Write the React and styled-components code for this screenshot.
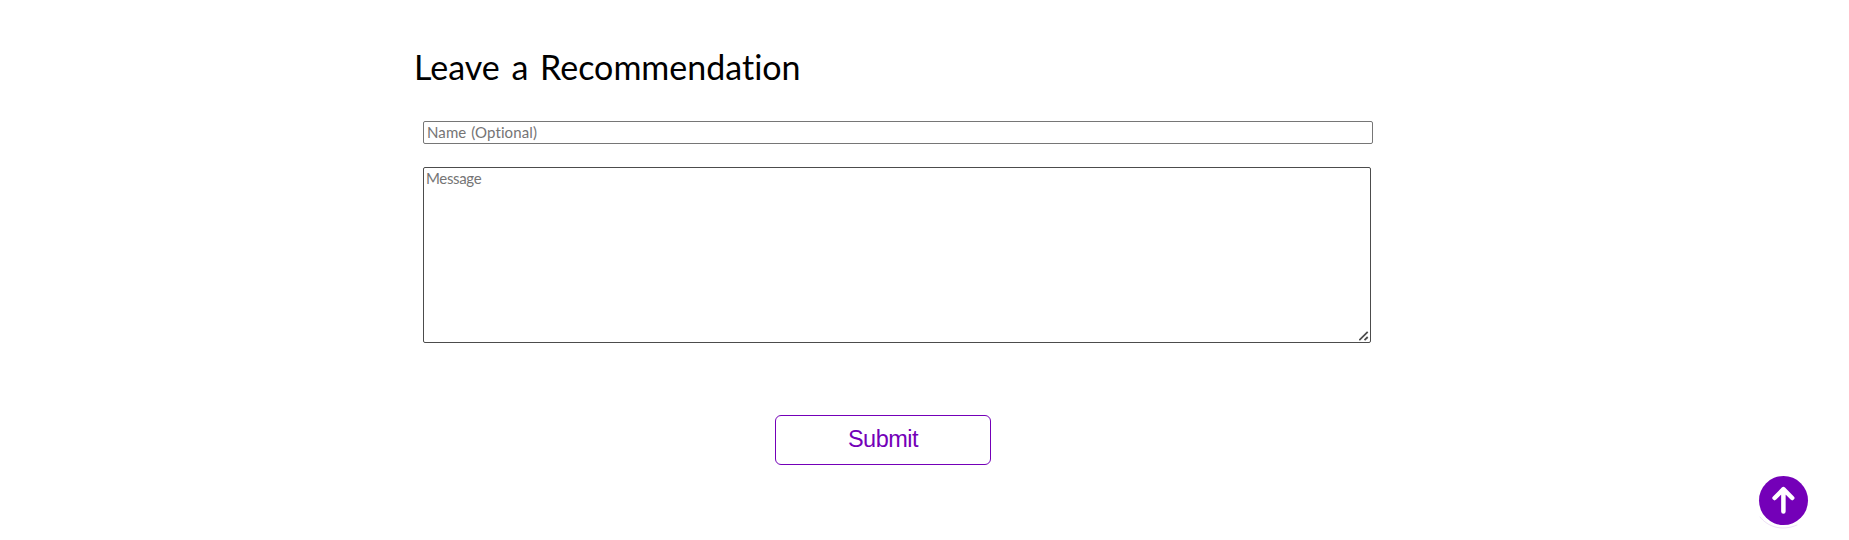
import React from "react";
import styled, { createGlobalStyle } from "styled-components";

const Global = createGlobalStyle`
  body { margin: 0; background: #fff; }
  * { box-sizing: border-box; }
`;
const Page = styled.main`
  position: relative;
  height: 540px;
  overflow: hidden;
`;
const Form = styled.form`
  display: flex;
  flex-direction: column;
  width: 960px;
  margin-left: 413px;
  padding-top: 45px;
  font-variant-ligatures: none;
`;
const Title = styled.h2`
  margin: 0;
  padding-left: 1px;
  height: 76px;
  font: 400 34px/44px "Trebuchet MS", Lato, sans-serif;
  font-variant-ligatures: none;
  word-spacing: 3px;
  color: #000;
`;
const NameInput = styled.input`
  margin-left: 10px;
  width: 950px;
  height: 23px;
  padding: 0 3px 2px;
  border: 1px solid #767676;
  border-radius: 2px;
  font: 15px "Trebuchet MS", Lato, sans-serif;
  font-variant-ligatures: none;
  word-spacing: 1px;
  letter-spacing: 0.1px;
  &::placeholder { color: #757575; }
`;
const MessageField = styled.div`
  position: relative;
  margin: 23px 0 0 10px;
  width: 948px;
  height: 176px;
`;
const Message = styled.textarea`
  display: block;
  width: 100%;
  height: 100%;
  padding: 1px 2px;
  border: 1px solid #4c4c4c;
  border-radius: 2px;
  resize: none;
  font: 15px/18px "Trebuchet MS", Lato, sans-serif;
  letter-spacing: -0.35px;
  &::placeholder { color: #757575; }
`;
const Grip = styled.svg`
  position: absolute;
  right: 2px;
  bottom: 2px;
  width: 10px;
  height: 10px;
  pointer-events: none;
`;
const Submit = styled.button`
  margin: 72px 0 0 362px;
  width: 216px;
  height: 50px;
  padding: 0 0 2px;
  border: 1px solid #7400b8;
  border-radius: 6px;
  background: #fff;
  color: #7400b8;
  font: 23.5px "Liberation Sans", sans-serif;
  letter-spacing: -0.5px;
`;
const Top = styled.a`
  position: absolute;
  right: 41px;
  bottom: 15px;
  width: 49px;
  height: 49px;
  border-radius: 50%;
  background: #7400b8;
  svg { display: block; overflow: visible; }
`;

export default function App() {
  return (
    <Page>
      <Global />
      <Form>
        <Title>Leave a Recommendation</Title>
        <NameInput placeholder="Name (Optional)" />
        <MessageField>
          <Message placeholder="Message" />
          <Grip viewBox="0 0 10 10" fill="none" stroke="#4c4c4c" strokeWidth="1.8">
            <path d="M.3 9.2 8.7.8M5.5 9.2 8.7 6" />
          </Grip>
        </MessageField>
        <Submit type="button">Submit</Submit>
      </Form>
      <Top aria-label="Back to top">
        <svg width="49" height="49" fill="none" stroke="#fff" strokeWidth="4.5" strokeLinecap="round" strokeLinejoin="round">
          <path d="M24.4 13.2V35.6M15.6 22l8.8-8.8 8.8 8.8" />
          <path d="M1 41C8 50 22 56 38 49" stroke="#7400b8" strokeWidth="1" strokeOpacity=".12" />
        </svg>
      </Top>
    </Page>
  );
}
